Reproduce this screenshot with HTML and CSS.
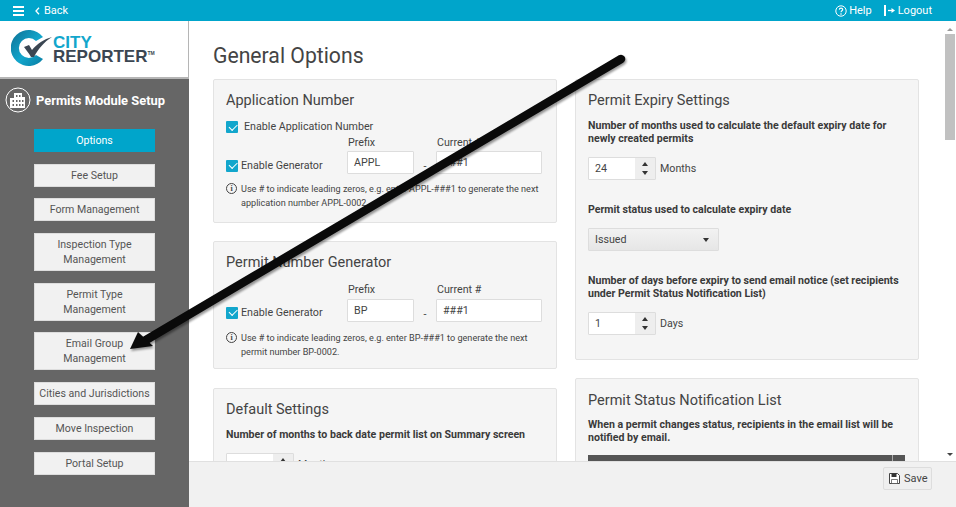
FILE: index.html
```html
<!DOCTYPE html>
<html lang="en">
<head>
<meta charset="utf-8">
<title>General Options</title>
<link rel="stylesheet" href="styles.css">
</head>
<body>
<header class="topbar">
  <div class="topleft">
    <svg class="burger" width="11" height="10" viewBox="0 0 11 10"><path d="M0 1h11M0 5h11M0 9h11" stroke="#fff" stroke-width="1.8"/></svg>
    <svg class="chev" width="5" height="8" viewBox="0 0 5 8"><path d="M4 .8 1 4l3 3.2" fill="none" stroke="#fff" stroke-width="1.3"/></svg>
    <span>Back</span>
  </div>
  <div class="topright">
    <svg width="12" height="12" viewBox="0 0 12 12"><circle cx="6" cy="6" r="5.2" fill="none" stroke="#fff" stroke-width="1"/><path d="M4.3 4.6C4.4 2.6 7.8 2.7 7.7 4.6 7.600 5.8 6 5.800 6 7.200" fill="none" stroke="#fff" stroke-width="1.1"/><circle cx="6" cy="9" r=".8" fill="#fff"/></svg>
    <span class="help">Help</span>
    <svg class="logout-icon" width="11" height="11" viewBox="0 0 11 11"><path d="M0 0h2v11H0z" fill="#fff"/><path d="M4 5.500h4" stroke="#fff" stroke-width="1.3"/><path d="M7.500 3 11 5.500 7.500 8z" fill="#fff"/></svg>
    <span>Logout</span>
  </div>
</header>
<div class="shell">
  <aside class="sidebar">
    <div class="logo">
      <svg class="mark" width="42" height="38" viewBox="0 0 42 38">
        <defs><linearGradient id="lg" x1="0" x2="1" y1="0" y2="1"><stop offset="0" stop-color="#0d6f93"/><stop offset=".55" stop-color="#12a6cc"/><stop offset="1" stop-color="#0a7da3"/></linearGradient></defs>
        <path d="M32 7A18 18 0 1 0 32 29L25 25A10 10 0 1 1 25 11Z" fill="url(#lg)"/>
        <path d="M13 17 18 15 21 20C26 14 33 9 41 7 33 12 27 19 23 27L20 27C18 23 15 20 13 17Z" fill="#3b4652"/>
      </svg>
      <div class="logotext">
        <div class="city">CITY</div>
        <div class="reporter">REPORTER<sup>TM</sup></div>
      </div>
    </div>
    <div class="sidehead">
      <svg width="26" height="26" viewBox="0 0 26 26"><circle cx="13" cy="13" r="12" fill="none" stroke="#fff" stroke-width="1"/><path d="M9 6h8v4h3v11H5V11h4z" fill="#fff"/><path d="M11 8h1.500v2H11zM14 8h1.500v2H14zM7.500 13H9v2H7.500zM11 13h1.500v2H11zM14 13h1.500v2H14zM17 13h1.500v2H17zM7.500 17H9v2H7.500zM11 17h1.500v2H11zM14 17h1.500v2H14zM17 17h1.500v2H17z" fill="#666"/></svg>
      <span>Permits Module Setup</span>
    </div>
    <nav class="sidenav">
      <a class="navbtn active">Options</a>
      <a class="navbtn">Fee Setup</a>
      <a class="navbtn">Form Management</a>
      <a class="navbtn tall">Inspection Type Management</a>
      <a class="navbtn tall">Permit Type Management</a>
      <a class="navbtn tall">Email Group Management</a>
      <a class="navbtn">Cities and Jurisdictions</a>
      <a class="navbtn">Move Inspection</a>
      <a class="navbtn">Portal Setup</a>
    </nav>
  </aside>
  <main class="main">
    <div class="scroll">
      <div class="content">
        <h1>General Options</h1>
        <div class="columns">
          <div class="col">
            <section class="panel p-app">
              <h2>Application Number</h2>
              <label class="check first"><i class="box"></i><span>Enable Application Number</span></label>
              <div class="genrow">
                <label class="check gen"><i class="box"></i><span>Enable Generator</span></label>
                <div class="field f1"><span class="cap">Prefix</span><span class="input">APPL</span></div>
                <span class="dash">-</span>
                <div class="field f2"><span class="cap">Current #</span><span class="input">###1</span></div>
              </div>
              <div class="note"><span class="info">i</span><p>Use # to indicate leading zeros, e.g. enter APPL-###1 to generate the next application number APPL-0002.</p></div>
            </section>
            <section class="panel p-permit">
              <h2>Permit Number Generator</h2>
              <div class="genrow">
                <label class="check gen"><i class="box"></i><span>Enable Generator</span></label>
                <div class="field f1"><span class="cap">Prefix</span><span class="input">BP</span></div>
                <span class="dash">-</span>
                <div class="field f2"><span class="cap">Current #</span><span class="input">###1</span></div>
              </div>
              <div class="note"><span class="info">i</span><p>Use # to indicate leading zeros, e.g. enter BP-###1 to generate the next permit number BP-0002.</p></div>
            </section>
            <section class="panel p-default">
              <h2>Default Settings</h2>
              <p class="strong">Number of months to back date permit list on Summary screen</p>
              <div class="spinrow"><span class="spin"><span class="spinval"></span><span class="arrows"><b class="up"></b><b class="down"></b></span></span><span>Months</span></div>
            </section>
          </div>
          <div class="col">
            <section class="panel p-expiry">
              <h2>Permit Expiry Settings</h2>
              <p class="strong">Number of months used to calculate the default expiry date for newly created permits</p>
              <div class="spinrow"><span class="spin"><span class="spinval">24</span><span class="arrows"><b class="up"></b><b class="down"></b></span></span><span>Months</span></div>
              <p class="strong s2">Permit status used to calculate expiry date</p>
              <div class="select"><span>Issued</span><b class="down"></b></div>
              <p class="strong s3">Number of days before expiry to send email notice (set recipients under Permit Status Notification List)</p>
              <div class="spinrow"><span class="spin"><span class="spinval">1</span><span class="arrows"><b class="up"></b><b class="down"></b></span></span><span>Days</span></div>
            </section>
            <section class="panel p-notify">
              <h2>Permit Status Notification List</h2>
              <p class="strong">When a permit changes status, recipients in the email list will be notified by email.</p>
              <div class="darkbar"><span class="darkcell"></span></div>
            </section>
          </div>
        </div>
      </div>
      <div class="scrollbar"><b class="sb-up"></b><span class="thumb"></span><b class="sb-down"></b></div>
    </div>
    <footer class="footer">
      <button class="save" type="button">
        <svg width="11" height="11" viewBox="0 0 11 11"><path d="M.5.500h8l2 2v8H.5z" fill="#fff" stroke="#444"/><path d="M2.500.500h5V4h-5z" fill="#333"/><path d="M2.500 6.500h6v4h-6z" fill="#fff" stroke="#444" stroke-width=".7"/></svg>
        <span>Save</span>
      </button>
    </footer>
  </main>
</div>
<svg class="arrow" width="956" height="507" viewBox="0 0 956 507">
  <defs><filter id="sh" x="-5%" y="-5%" width="110%" height="110%"><feGaussianBlur stdDeviation="1.2"/></filter></defs>
  <g filter="url(#sh)" opacity=".4" transform="translate(1 2)"><path d="M621 59 146 340" stroke="#000" stroke-width="9" stroke-linecap="round"/><path d="M130 349 138 332 153 346Z"/></g>
  <path d="M621 59 146 340" stroke="#0a0a0a" stroke-width="8.500" stroke-linecap="round"/>
  <path d="M130 349 138 332 153 346Z" fill="#0a0a0a"/>
</svg>
</body>
</html>
```
FILE: styles.css
```css
* { box-sizing: border-box; }
html, body { margin: 0; height: 507px; overflow: hidden; }
body { font-family: Roboto, "Liberation Sans", sans-serif; font-size: 10.700px; color: #444; background: #fff; position: relative; }

.topbar { height: 21px; background: #00a5cb; color: #fff; display: flex; justify-content: space-between; align-items: center; font-size: 11px; padding: 0 24px 0 13px; }
.topleft, .topright { display: flex; align-items: center; }
.chev { margin: 0 4px 0 11px; }
.help { margin: 0 12px 0 2px; }
.logout-icon { margin-right: 3px; }

.shell { display: flex; height: 486px; }
.sidebar { width: 189px; flex: none; background: #666; }
.logo { height: 58px; background: #fff; border-bottom: 2px solid #b5b5b5; border-right: 1px solid #b5b5b5; display: flex; align-items: center; padding-left: 11px; }
.logotext { font-family: "Liberation Sans", sans-serif; font-weight: 700; line-height: 14px; padding-top: 2px; }
.city { color: #12a6cc; font-size: 17px; }
.reporter { color: #3b4652; font-size: 17px; }
.reporter sup { font-size: 5px; vertical-align: 7px; line-height: 0; }

.sidehead { display: flex; align-items: center; gap: 5px; height: 50px; padding: 0 0 8px 5px; color: #fff; font-size: 12.900px; font-weight: 700; }
.sidenav { display: flex; flex-direction: column; gap: 11.700px; padding-left: 34px; }
.navbtn { width: 121px; height: 23px; padding: 0 2px; display: flex; align-items: center; justify-content: center; text-align: center; background: #f1f1f1; border: 1px solid #ddd; color: #555; line-height: 15px; font-size: 10.600px; }
.navbtn.tall { height: 38px; padding: 0 14px; }
.navbtn.active { background: #00a5cb; border-color: #00a5cb; color: #fff; }

.main { flex: 1; min-width: 0; display: flex; flex-direction: column; }
.scroll { flex: 1; min-height: 0; display: flex; overflow: hidden; }
.content { flex: 1; min-width: 0; padding: 23px 24px 0; }
h1 { margin: 0 0 11px; font-size: 21.200px; font-weight: 400; line-height: 24px; color: #444; }
.columns { display: grid; grid-template-columns: 344px 344px; column-gap: 18px; align-items: start; }
.col { display: flex; flex-direction: column; gap: 18px; }
.panel { background: #f5f5f5; border: 1px solid #e3e3e3; border-radius: 2px; padding: 12px 12px 0; }
.p-app { height: 144px; }
.p-permit { height: 128px; margin-bottom: 1px; }
.p-default { padding-top: 12px; }
.p-expiry { height: 281px; }
.p-notify { padding-top: 13px; }
h2 { margin: 0; font-size: 14.500px; font-weight: 400; line-height: 17px; color: #444; }
.check { display: flex; align-items: center; }
.box { width: 12px; height: 12px; border-radius: 1px; background: #12a6cc; position: relative; flex: none; }
.box::after { content: ""; position: absolute; left: 2.500px; top: 2.500px; width: 7px; height: 3.500px; border-left: 1.500px solid #fff; border-bottom: 1.500px solid #fff; transform: rotate(-45deg); }
.first { margin-top: 11px; gap: 6px; line-height: 14px; }
.gen { gap: 3px; flex: none; width: 121px; margin-top: 23px; }
.genrow { display: flex; align-items: flex-start; height: 43px; margin-top: 2px; }
.p-permit .genrow { margin-top: 7px; height: 50px; }
.p-permit .field { padding-top: 5px; }
.p-permit .gen { margin-top: 28px; }
.p-permit .dash { margin-top: 30px; }
.p-permit .input { margin-top: 2px; }
.field { display: flex; flex-direction: column; }
.cap { line-height: 14px; padding-left: 1px; }
.f1 { width: 67px; }
.f2 { width: 106px; }
.input { display: flex; align-items: center; height: 23px; margin-top: 1px; padding-left: 6px; background: #fff; border: 1px solid #ddd; border-radius: 1px; font-size: 10.700px; }
.dash { width: 22px; text-align: center; margin-top: 24px; }
.note { display: flex; gap: 4px; margin-top: 3px; font-size: 9.100px; line-height: 14px; }
.note p { margin: 0; width: 304px; }
.info { width: 11px; height: 11px; flex: none; margin-top: 1px; border: 1px solid #444; border-radius: 50%; font: 700 8px/9px "Liberation Serif", serif; text-align: center; }
.strong { margin: 10px 0 0; font-size: 10.600px; font-weight: 700; line-height: 13px; color: #3a3a3a; }
.p-notify .strong { margin-top: 9px; }
.spinrow { display: flex; align-items: center; gap: 4px; margin-top: 12px; }
.spin { display: flex; width: 68px; height: 23px; border: 1px solid #ddd; border-radius: 1px; background: #eee; }
.spinval { width: 46px; background: #fff; padding-left: 6px; line-height: 21px; }
.arrows { flex: 1; display: flex; flex-direction: column; align-items: center; justify-content: center; gap: 5px; }
.up, .down { display: block; width: 0; height: 0; border-left: 3px solid transparent; border-right: 3px solid transparent; }
.up { border-bottom: 4px solid #333; }
.down { border-top: 4px solid #333; }
.strong.s2 { margin-top: 23px; }
.select { display: flex; justify-content: space-between; align-items: center; width: 131px; height: 23px; margin-top: 12px; padding: 0 9px 0 6px; background: linear-gradient(#f2f2f2, #e6e6e6); border: 1px solid #ddd; border-radius: 1px; }
.strong.s3 { margin-top: 23px; }
.darkbar { display: flex; justify-content: flex-end; height: 20px; margin-top: 11px; width: 317px; background: #555; }
.darkcell { width: 13px; height: 100%; border-left: 1px solid #aaa; }

.scrollbar { width: 13px; flex: none; position: relative; display: flex; flex-direction: column; align-items: center; padding-top: 7px; background: #fff; }
.thumb { width: 10px; height: 106px; margin-top: 3px; background: #c1c1c1; }
.sb-up, .sb-down { display: block; width: 0; height: 0; border-left: 3px solid transparent; border-right: 3px solid transparent; }
.sb-up { border-bottom: 3px solid #999; }
.sb-down { position: absolute; bottom: 5px; border-top: 3px solid #444; }

.footer { height: 46px; flex: none; background: #f1f1f1; border-top: 1px solid #e0e0e0; display: flex; justify-content: flex-end; padding: 5px 24px 0 0; }
.save { display: flex; align-items: center; gap: 4px; width: 49px; height: 23px; padding: 0 0 0 5px; background: #efefef; border: 1px solid #ddd; border-radius: 2px; color: #444; font: 400 11px Roboto, sans-serif; }

.arrow { position: absolute; left: 0; top: 0; pointer-events: none; }
```
